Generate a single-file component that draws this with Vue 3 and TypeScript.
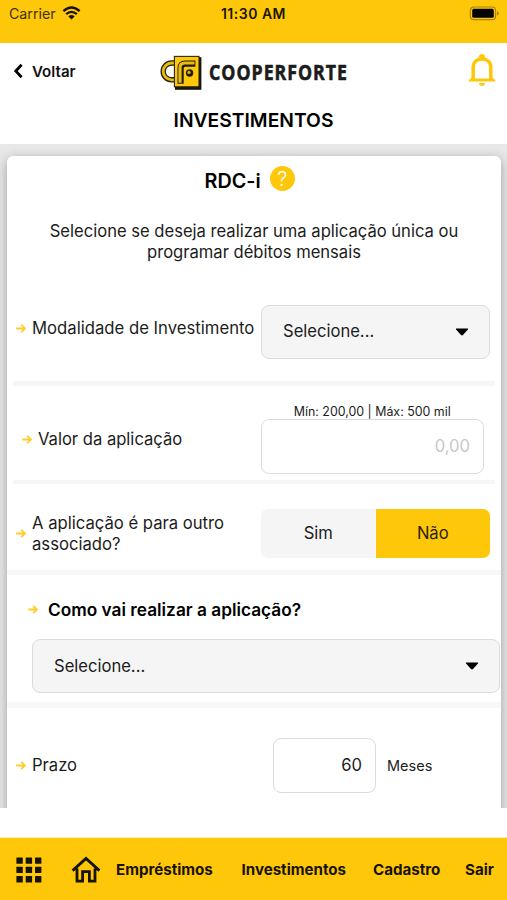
<script setup lang="ts">
import { ref } from 'vue'

const other = ref<'Sim' | 'Não'>('Não')
const options = ['Sim', 'Não'] as const
const links = [
  { label: 'Empréstimos', cls: 'loans' },
  { label: 'Investimentos', cls: 'invest' },
  { label: 'Cadastro', cls: 'register' },
  { label: 'Sair', cls: 'exit' },
]
const cells = [0, 9.3, 18.6]
const arrow = 'M.2 5.5H9M5.2 1.9L8.9 5.5L5.2 9.1'
</script>

<template>
  <div class="screen">
    <div class="status">
      <div class="carrier">
        <span>Carrier</span>
        <svg width="19" height="14" viewBox="0 0 19 14">
          <path d="M1.4 5.1Q9.5-2 17.6 5.1" fill="none" stroke="#171300" stroke-width="2.5" />
          <path d="M4.2 8.2Q9.5 3.6 14.8 8.2" fill="none" stroke="#171300" stroke-width="2.3" />
          <path d="M6.4 10.4Q9.5 7.8 12.6 10.4L9.5 13.6Z" fill="#171300" />
        </svg>
      </div>
      <span class="clock">11:30 AM</span>
      <svg class="battery" width="31" height="15" viewBox="0 0 31 15">
        <rect x="1.4" y="1" width="25.2" height="12.6" rx="3.4" fill="none" stroke="#a78508" stroke-width="1.2" />
        <rect x="3.2" y="2.8" width="21.6" height="9" rx="1.6" fill="#050400" />
        <path d="M28 5.2Q30 6 30 7.3Q30 8.6 28 9.4Z" fill="#a78508" />
      </svg>
    </div>

    <header class="header">
      <div class="bar">
        <button class="back">
          <svg width="10" height="16" viewBox="0 0 10 16">
            <path d="M8.6 1.8L2.8 8L8.6 14.2" fill="none" stroke="#000" stroke-width="2.8" />
          </svg>
          <span>Voltar</span>
        </button>
        <svg class="logo" width="192" height="36" viewBox="0 0 192 36">
          <path d="M14 8H10.6A8.4 8.4 0 0 0 10.6 24.8H14" fill="none" stroke="#262109" stroke-width="5.4" />
          <path d="M14 8H10.6A8.4 8.4 0 0 0 10.6 24.8H14" fill="none" stroke="#e9bd10" stroke-width="2.8" />
          <rect x="14" y="2.2" width="26.4" height="32.6" fill="#19170d" />
          <rect x="13.4" y="1.4" width="24.6" height="30.4" fill="#fdc809" stroke="#2c260b" stroke-width="1.1" />
          <path d="M19.6 28.8V13.2Q19.6 8.6 24.2 8.6H34.4" fill="none" stroke="#211c0a" stroke-width="6.2" />
          <path d="M19 27.8V12.8Q19 8 24 8H33.5" fill="none" stroke="#e9bc13" stroke-width="3.2" />
          <circle cx="28.6" cy="18" r="3.7" fill="#211c0a" />
          <circle cx="28" cy="17.4" r="1.7" fill="#d5ab14" />
          <text x="48" y="25.4" textLength="139" lengthAdjust="spacingAndGlyphs">COOPERFORTE</text>
        </svg>
        <svg class="bell" width="28" height="34" viewBox="0 0 28 34">
          <path d="M5.2 26.5V15C5.2 9.4 8.8 5.9 14 5.9S22.8 9.4 22.8 15V26.5" fill="none" stroke="#ffc709" stroke-width="3.5" />
          <path d="M.8 28.5V27L4 24.4H6.8V25.6H21.2V24.4H24L27.2 27V28.5Z" fill="#ffc709" />
          <path d="M10.6 5.4C10.6-.4 17.4-.4 17.4 5.4ZM11 30H17C17 33.8 11 33.8 11 30Z" fill="#ffc709" />
        </svg>
      </div>
      <h1>INVESTIMENTOS</h1>
    </header>

    <main class="content">
      <section class="card">
        <div class="title">
          <h2>RDC-i</h2>
          <span class="help">?</span>
        </div>
        <p class="intro">
          <span class="l1">Selecione se deseja realizar uma aplicação única ou</span><br />
          <span class="l2">programar débitos mensais</span>
        </p>

        <div class="row mode">
          <svg class="arrow" viewBox="0 0 10 11"><path :d="arrow" /></svg>
          <label class="mode-label">Modalidade de Investimento</label>
          <div class="select">
            <span>Selecione...</span>
            <svg width="14" height="8" viewBox="0 0 14 8"><path d="M1.4.5H12.6Q13.6.5 12.9 1.4L8 7.1Q7 8 6 7.1L1.1 1.4Q.4.5 1.4.5Z" /></svg>
          </div>
        </div>

        <div class="row amount">
          <svg class="arrow" viewBox="0 0 10 11"><path :d="arrow" /></svg>
          <label class="amount-label">Valor da aplicação</label>
          <div class="field">
            <small>Mín: 200,00 | Máx: 500 mil</small>
            <div class="input">0,00</div>
          </div>
        </div>

        <div class="row other">
          <svg class="arrow" viewBox="0 0 10 11"><path :d="arrow" /></svg>
          <label class="other-label">A aplicação é para outro<br />associado?</label>
          <div class="toggle">
            <button v-for="o in options" :key="o" :class="{ on: other === o }" @click="other = o">{{ o }}</button>
          </div>
        </div>

        <div class="how">
          <div class="how-head">
            <svg class="arrow" viewBox="0 0 10 11"><path :d="arrow" /></svg>
            <strong>Como vai realizar a aplicação?</strong>
          </div>
          <div class="select wide">
            <span>Selecione...</span>
            <svg width="14" height="8" viewBox="0 0 14 8"><path d="M1.4.5H12.6Q13.6.5 12.9 1.4L8 7.1Q7 8 6 7.1L1.1 1.4Q.4.5 1.4.5Z" /></svg>
          </div>
        </div>

        <div class="row term">
          <svg class="arrow" viewBox="0 0 10 11"><path :d="arrow" /></svg>
          <label class="term-label">Prazo</label>
          <div class="input months">60</div>
          <span class="unit">Meses</span>
        </div>
      </section>
    </main>

    <nav class="nav">
      <svg class="grid" width="26" height="26" viewBox="0 0 26 26">
        <template v-for="y in cells" :key="y">
          <rect v-for="x in cells" :key="x" :x="x + 0.4" :y="y + 0.4" width="6.4" height="6.4" rx=".5" />
        </template>
      </svg>
      <svg class="home" width="30" height="28" viewBox="0 0 30 28">
        <path d="M1.6 14.6L15 2.4L28.4 14.6M6 12.5V25.2H11.6V15.6H18.4V25.2H24V12.5" fill="none" stroke="#171300" stroke-width="2.8" />
      </svg>
      <a v-for="l in links" :key="l.cls" :class="l.cls">{{ l.label }}</a>
    </nav>
  </div>
</template>

<style>
body { margin: 0; background: #fff; }
</style>

<style scoped>
.screen {
  width: 507px;
  height: 900px;
  overflow: hidden;
  display: flex;
  flex-direction: column;
  background: #fff;
  color: #1c1c1c;
  font: 16.58px/21px Inter, "Liberation Sans", sans-serif;
}
.screen * { box-sizing: border-box; }
button { border: 0; padding: 0; background: none; font: inherit; color: inherit; }
h1, h2, p { margin: 0; }
label, span, small, strong, a { white-space: nowrap; }

.status {
  flex: none;
  height: 43px;
  padding: 5px 7px 0 9px;
  background: #ffc709;
  display: grid;
  grid-template-columns: 1fr auto 1fr;
  align-items: start;
  line-height: 18px;
  font-size: 14.2px;
}
.carrier { display: flex; gap: 6px; color: #3c3008; }
.carrier svg { margin-top: 1px; }
.clock { font-weight: 600; font-size: 14px; letter-spacing: .5px; margin-left: -2px; color: #1c1600; }
.battery { justify-self: end; margin-top: 1px; }

.header { flex: none; height: 101px; }
.bar { display: flex; align-items: flex-start; height: 61px; padding: 0 11px 0 13px; }
.back { display: flex; align-items: center; gap: 9px; margin-top: 18px; height: 21px; width: 148px; font-weight: 600; font-size: 15.1px; color: #111; }
.back svg { margin-top: -1px; }
.logo { margin-top: 12px; overflow: visible; }
.logo text { font: 700 21.3px "Open Sans", sans-serif; letter-spacing: 1.2px; fill: #1c1c1c; stroke: #1c1c1c; stroke-width: .6px; }
.bell { margin: 10px 0 0 auto; }
h1 { text-align: center; font-size: 19.3px; line-height: 32px; font-weight: 600; color: #000; }

.content { flex: none; height: 664px; background: #e8e8e8; overflow: hidden; padding: 12px 6px 0 7px; }
.card { height: 700px; background: #fff; border-radius: 6px; box-shadow: 0 3px 12px rgba(0, 0, 0, .32); }
.title { display: flex; gap: 9px; padding: 10px 0 0 197.5px; height: 65px; }
h2 { font-size: 19.8px; line-height: 31px; font-weight: 600; color: #000; }
.help { width: 25px; height: 25px; border-radius: 50%; background: #ffc709; color: #fff; text-align: center; line-height: 26px; font-size: 20px; font-weight: 300; }
.intro { height: 60px; text-align: center; }

.arrow { width: 10px; height: 11px; flex: none; }
.arrow path { fill: none; stroke: #ffce2c; stroke-width: 1.8; }
.row { display: flex; align-items: center; }
.mode { height: 105px; margin: 0 6px; padding: 1px 5px 0 3px; border-bottom: 5px solid #f6f6f6; }
.mode .arrow, .mode label { margin-top: -7px; }
.mode label { margin-left: 6px; font-size: 16.7px; }
.select {
  width: 229px;
  height: 54px;
  margin-left: auto;
  padding: 0 20.5px 0 21px;
  display: flex;
  align-items: center;
  justify-content: space-between;
  background: #f5f5f5;
  border: 1.5px solid #dcdcdc;
  border-radius: 8px;
}
.amount { height: 98px; margin: 0 6px; padding: 0 11px 0 9px; border-bottom: 4px solid #f6f6f6; }
.amount > .arrow, .amount > label { margin-top: 12px; }
.amount label { margin-left: 6px; }
.field { margin-left: auto; width: 223.5px; text-align: center; padding-top: 12px; }
small { display: block; font-size: 12.4px; line-height: 14px; }
.input { height: 55px; padding: 0 13px; border: 1.5px solid #dcdcdc; border-radius: 8px; background: #fff; color: #c7c7c7; text-align: right; line-height: 53px; }
.other { height: 91px; padding: 13px 11px 0 9px; border-bottom: 5px solid #f8f8f8; }
.other label { margin-left: 6px; font-size: 16.65px; }
.toggle { margin-left: auto; display: flex; width: 229px; height: 49px; border-radius: 7px; overflow: hidden; background: #f5f5f5; }
.toggle button { flex: 1; }
.toggle .on { background: #ffc709; color: #2a2208; }
.how { height: 133px; border-bottom: 6px solid #f8f8f8; padding: 24px 1px 0 25px; }
.how-head { display: flex; align-items: center; gap: 10px; height: 21px; margin-left: -4px; }
strong { font-weight: 600; font-size: 17.25px; color: #000; }
.wide { width: auto; height: 54px; margin: 19px 0 0; }
.term { padding: 30px 0 0 9px; }
.term label { margin-left: 6px; width: 241px; }
.months { width: 103px; color: #1c1c1c; }
.unit { margin-left: 11px; font-size: 14.5px; }

.nav { flex: none; height: 62px; margin-top: 30px; padding: 2px 0 0 16px; display: flex; align-items: center; background: #ffc709; fill: #171300; color: #171300; font-size: 15.1px; font-weight: 650; box-shadow: 0 -1px 1px #fff0bd; }
.nav a { margin-top: -1px; }
.home { margin-left: 29px; }
.loans { margin-left: 15px; width: 125.5px; }
.invest { width: 131.5px; }
.register { width: 92px; }
</style>
